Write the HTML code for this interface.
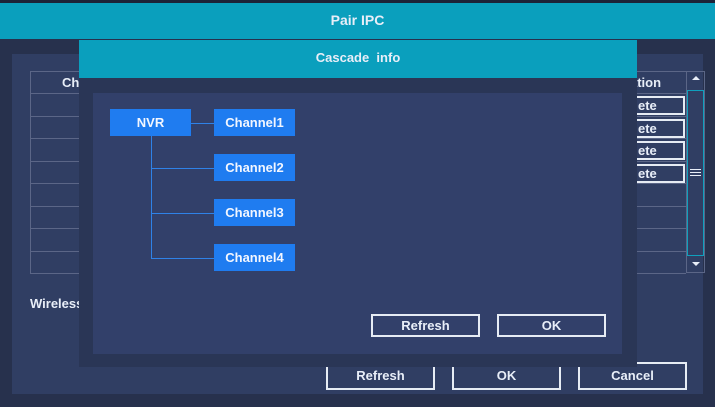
<!DOCTYPE html>
<html><head><style>
*{margin:0;padding:0;box-sizing:border-box}
body{width:715px;height:407px;background:#27314d;position:relative;overflow:hidden;font-family:"Liberation Sans",sans-serif;font-weight:bold;color:#e8eef8}
.a{position:absolute}
.btn{position:absolute;border:2px solid #e6ecf4;color:#e8eef8;font-size:13px;text-align:center;line-height:23px}
.row{position:absolute;left:30px;width:656px;height:1px;background:#5b6687}
.box{position:absolute;background:#1f7cf0;color:#f2f6ff;font-size:13px;text-align:center;line-height:27px;width:81px;height:27px}
.ln{position:absolute;background:#2f82e8}
.del{position:absolute;left:626px;width:59px;height:19px;border:2px solid #e6ecf4;font-size:13px;line-height:15px;color:#e8eef8;padding-left:10px}
</style></head><body>
<div class="a" style="left:0;top:0;width:715px;height:3px;background:#1c2338"></div>
<div class="a" style="left:0;top:3px;width:715px;height:36px;background:#0a9fbd;text-align:center;line-height:34px;font-size:14px">Pair IPC</div>
<div class="a" style="left:12px;top:54px;width:691px;height:340px;background:#303e63"></div>
<div class="a" style="left:30px;top:71px;width:1px;height:202px;background:#5b6687"></div>
<div class="row" style="top:71px"></div><div class="row" style="top:93px"></div><div class="row" style="top:116px"></div><div class="row" style="top:138px"></div><div class="row" style="top:161px"></div><div class="row" style="top:183px"></div><div class="row" style="top:206px"></div><div class="row" style="top:228px"></div><div class="row" style="top:251px"></div><div class="row" style="top:273px"></div>
<div class="a" style="left:62px;top:75px;font-size:13px">Ch</div>
<div class="a" style="left:630px;top:75px;font-size:13px">ation</div>
<div class="del" style="top:96px">ete</div>
<div class="del" style="top:119px">ete</div>
<div class="del" style="top:141px">ete</div>
<div class="del" style="top:164px">ete</div>
<div class="a" style="left:686px;top:71px;width:19px;height:202px;border:1px solid #5b6687"></div>
<div class="a" style="left:687px;top:90px;width:17px;height:166px;border:1px solid #0fa0bd"></div>
<div class="a" style="left:692px;top:76px;width:0;height:0;border-left:4px solid transparent;border-right:4px solid transparent;border-bottom:4px solid #e8eef8"></div>
<div class="a" style="left:692px;top:262px;width:0;height:0;border-left:4px solid transparent;border-right:4px solid transparent;border-top:4px solid #e8eef8"></div>
<div class="a" style="left:690px;top:169px;width:11px;height:1px;background:#e8eef8;box-shadow:0 3px 0 #e8eef8,0 6px 0 #e8eef8"></div>
<div class="a" style="left:30px;top:296px;font-size:13px">Wireless</div>
<div class="btn" style="left:326px;top:362px;width:109px;height:28px">Refresh</div>
<div class="btn" style="left:452px;top:362px;width:109px;height:28px">OK</div>
<div class="btn" style="left:578px;top:362px;width:109px;height:28px">Cancel</div>
<div class="a" style="left:79px;top:40px;width:558px;height:327px;background:#2a3656"></div>
<div class="a" style="left:79px;top:40px;width:558px;height:38px;background:#0a9fbd;text-align:center;line-height:36px;font-size:13px">Cascade&nbsp; info</div>
<div class="a" style="left:93px;top:93px;width:529px;height:261px;background:#32406a"></div>
<div class="ln" style="left:151px;top:136px;width:1px;height:123px"></div>
<div class="ln" style="left:191px;top:123px;width:23px;height:1px"></div>
<div class="ln" style="left:151px;top:168px;width:63px;height:1px"></div>
<div class="ln" style="left:151px;top:213px;width:63px;height:1px"></div>
<div class="ln" style="left:151px;top:258px;width:63px;height:1px"></div>
<div class="box" style="left:110px;top:109px">NVR</div>
<div class="box" style="left:214px;top:109px">Channel1</div>
<div class="box" style="left:214px;top:154px">Channel2</div>
<div class="box" style="left:214px;top:199px">Channel3</div>
<div class="box" style="left:214px;top:244px">Channel4</div>
<div class="btn" style="left:371px;top:314px;width:109px;height:23px;line-height:19px">Refresh</div>
<div class="btn" style="left:497px;top:314px;width:109px;height:23px;line-height:19px">OK</div>
</body></html>
